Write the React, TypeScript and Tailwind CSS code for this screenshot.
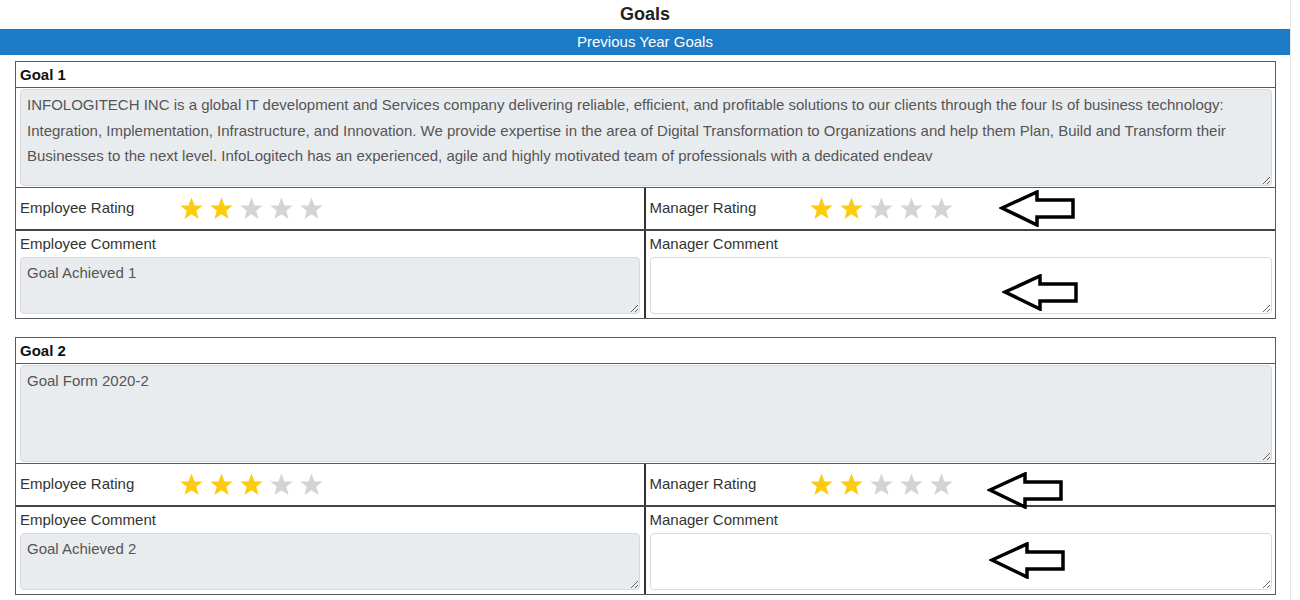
import React from 'react';

type Goal = {
  id: number;
  title: string;
  description: string;
  employeeRating: number;
  managerRating: number;
  employeeComment: string;
  managerComment: string;
};

const goals: Goal[] = [
  {
    id: 1,
    title: 'Goal 1',
    description:
      'INFOLOGITECH INC is a global IT development and Services company delivering reliable, efficient, and profitable solutions to our clients through the four Is of business technology: Integration, Implementation, Infrastructure, and Innovation. We provide expertise in the area of Digital Transformation to Organizations and help them Plan, Build and Transform their Businesses to the next level. InfoLogitech has an experienced, agile and highly motivated team of professionals with a dedicated endeav',
    employeeRating: 2,
    managerRating: 2,
    employeeComment: 'Goal Achieved 1',
    managerComment: '',
  },
  {
    id: 2,
    title: 'Goal 2',
    description: 'Goal Form 2020-2',
    employeeRating: 3,
    managerRating: 2,
    employeeComment: 'Goal Achieved 2',
    managerComment: '',
  },
];

function Star({ on }: { on: boolean }) {
  return (
    <svg width="27" height="25" viewBox="0 0 24 24" className="shrink-0">
      <polygon
        points="12,1.5 14.9,9 22.8,9.2 16.6,14.2 18.8,22 12,17.5 5.2,22 7.4,14.2 1.2,9.2 9.1,9"
        fill={on ? '#fdcb10' : '#d4d4d4'}
      />
    </svg>
  );
}

function Stars({ value }: { value: number }) {
  return (
    <div className="flex gap-[3px]">
      {[1, 2, 3, 4, 5].map((n) => (
        <Star key={n} on={n <= value} />
      ))}
    </div>
  );
}

function Arrow({ className }: { className: string }) {
  return (
    <svg width="78" height="37" viewBox="0 0 78 37" className={className}>
      <polygon
        points="3,18 38,2 38,10 74,10 74,27 38,27 38,35"
        fill="none"
        stroke="#000"
        strokeWidth="3.5"
        strokeLinejoin="miter"
      />
    </svg>
  );
}

const areaCls =
  'block w-full bg-[#e9ecef] border border-[#d6dadf] rounded-[4px] px-[6px] py-[2px] text-[15px] leading-[25.5px] text-[#555] outline-none';

function GoalBlock({ goal }: { goal: Goal }) {
  return (
    <div className="mx-[15px] mb-[18px] w-[1261px] border border-[#5a5a5a]">
      <div className="h-[26px] border-b border-[#5a5a5a] px-[4px] text-[15px] font-bold leading-[26px] text-[#111]">
        {goal.title}
      </div>
      <div className="border-b border-[#5a5a5a] pl-[4px] pr-[3px] pt-[1px] pb-[1px]">
        <textarea readOnly defaultValue={goal.description} className={`${areaCls} h-[97px]`} />
      </div>
      <div className="grid h-[43px] grid-cols-2 border-b-2 border-[#444]">
        <div className="flex items-center border-r-2 border-[#333] px-[4px]">
          <span className="w-[158px] text-[15px] text-[#333]">Employee Rating</span>
          <Stars value={goal.employeeRating} />
        </div>
        <div className="relative flex items-center px-[4px]">
          <span className="w-[158px] text-[15px] text-[#333]">Manager Rating</span>
          <Stars value={goal.managerRating} />
          <Arrow className={goal.id === 1 ? 'absolute left-[353px] top-[2px]' : 'absolute left-[341px] top-[8px]'} />
        </div>
      </div>
      <div className="grid grid-cols-2">
        <div className="border-r-2 border-[#333] px-[4px] pb-[4px]">
          <div className="h-[26px] text-[15px] leading-[26px] text-[#333]">Employee Comment</div>
          <textarea readOnly defaultValue={goal.employeeComment} className={`${areaCls} h-[57px]`} />
        </div>
        <div className="relative pl-[4px] pr-[3px] pb-[4px]">
          <div className="h-[26px] text-[15px] leading-[26px] text-[#333]">Manager Comment</div>
          <textarea readOnly defaultValue={goal.managerComment} className="block h-[57px] w-full rounded-[4px] border border-[#d6dadf] bg-white outline-none" />
          <Arrow className={goal.id === 1 ? 'absolute left-[356px] top-[43px]' : 'absolute left-[343px] top-[35px]'} />
        </div>
      </div>
    </div>
  );
}

export default function App() {
  return (
    <div className="min-h-[600px] bg-white font-['Liberation_Sans',Arial,sans-serif]">
      <div className="w-[1291px] border-r border-[#e6e6e6] min-h-[600px]">
        <h1 className="h-[29px] text-center text-[18px] font-bold leading-[29px] text-[#222]">Goals</h1>
        <div className="h-[26px] bg-[#1b7bc6] text-center text-[15px] leading-[26px] text-white">
          Previous Year Goals
        </div>
        <div className="pt-[6px]">
          {goals.map((g) => (
            <GoalBlock key={g.id} goal={g} />
          ))}
        </div>
      </div>
    </div>
  );
}
